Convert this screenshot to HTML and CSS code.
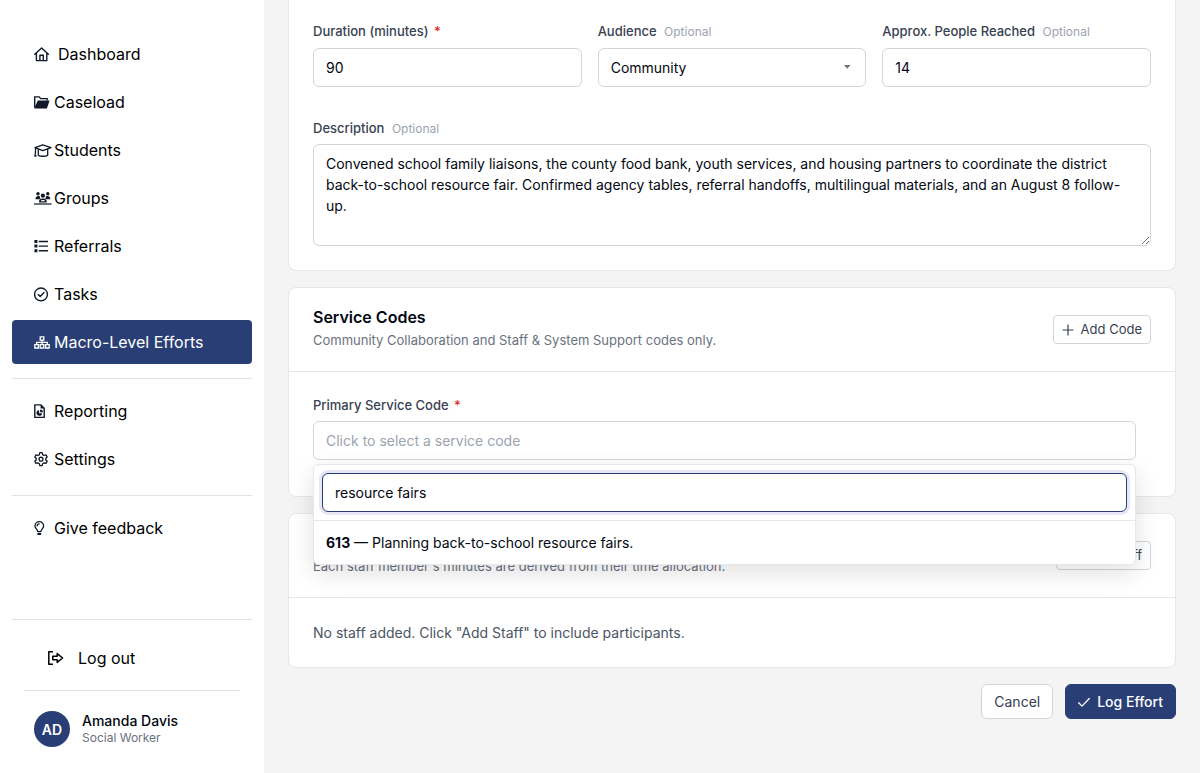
FILE: index.html
```html
<!DOCTYPE html>
<html lang="en">
<head>
<meta charset="utf-8">
<meta name="viewport" content="width=device-width, initial-scale=1">
<title>Log Macro-Level Effort</title>
<link rel="stylesheet" href="styles.css">
</head>
<body>
<div class="app">
  <aside class="sidebar">
    <nav class="nav" aria-label="Main">
      <a class="nav-item nav-item-wide" href="#">
        <svg class="icon" viewBox="0 0 16 16" fill="none" stroke="currentColor" stroke-width="1.4" stroke-linejoin="round" stroke-linecap="round"><path d="M.8 8.300 7.600 1.900l6.800 6.400M2.400 7.200v7.400h10.400V7.200M5.900 14.400V9.300h3.400v5.100"/></svg>
        Dashboard</a>
      <a class="nav-item" href="#">
        <svg class="icon" viewBox="0 0 16 16"><path fill="none" stroke="currentColor" stroke-width="1.400" d="M.7 13.500V2.900h4.500l1.500 1.700h6.400v2"/><path fill="currentColor" d="M3.800 6.500H15.600L12.900 14.500H.2z"/></svg>
        Caseload</a>
      <a class="nav-item" href="#">
        <svg class="icon icon-wide" viewBox="0 0 18 16" fill="none" stroke="currentColor" stroke-width="1.300" stroke-linejoin="round" stroke-linecap="round"><path d="M1 5.600 8.800 2.800l8.200 2.800-8.200 3zM4.300 7.200v6c1.400 1.400 7.800 1.400 9.400 0v-6M1.600 6.200c-.4 2.800.4 5-.8 7.800h1.400"/></svg>
        Students</a>
      <a class="nav-item" href="#">
        <svg class="icon icon-wide" viewBox="0 0 18 16" fill="currentColor"><circle cx="4" cy="3.700" r="1.700"/><circle cx="13.800" cy="3.700" r="1.700"/><circle cx="8.900" cy="5.700" r="2.100"/><path d="M1.500 9.200c0-2.300 1.200-3.300 2.800-3.300l1.700.4c-.2 1.300.1 2.200.8 2.900zM16.300 9.200c0-2.300-1.200-3.300-2.800-3.300l-1.700.4c.2 1.300-.1 2.200-.8 2.900z"/><path fill-rule="evenodd" d="M5 12.400c0-2.600 1.200-3.800 3.900-3.800s3.900 1.200 3.900 3.800zm1.700-1.200h4.400c-.2-.9-.9-1.200-2.200-1.200s-2 .3-2.200 1.200z"/><path d="M0 13.400h17.600v1.200H0z"/></svg>
        Groups</a>
      <a class="nav-item" href="#">
        <svg class="icon" viewBox="0 0 16 16" fill="currentColor"><path d="M.4 2h3v3h-3zM.4 6.600h3v3h-3zM.4 11.200h3v3h-3zM4.800 2.800H14v1.400H4.800zM4.800 7.400H14v1.400H4.800zM4.800 12H14v1.400H4.800z"/></svg>
        Referrals</a>
      <a class="nav-item" href="#">
        <svg class="icon" viewBox="0 0 16 16" fill="none" stroke="currentColor" stroke-width="1.400" stroke-linecap="round" stroke-linejoin="round"><circle cx="7" cy="8.400" r="6.400"/><path d="m4.200 8.600 2 2 3.800-4"/></svg>
        Tasks</a>
      <a class="nav-item nav-item-active" href="#" aria-current="page">
        <svg class="icon" viewBox="0 0 16 16" fill="none" stroke="currentColor" stroke-width="1.300"><path d="M6.200 2.800h3.600v3.400H6.200zM.8 10.600h3.600V14H.8zM6.200 10.600h3.600V14H6.200zM11.600 10.600h3.600V14h-3.600zM8 6.200v4.400M2.600 10.600V8.400h10.800v2.200"/></svg>
        Macro-Level Efforts</a>
      <hr class="rule">
      <a class="nav-item" href="#">
        <svg class="icon" viewBox="0 0 16 16"><path fill="none" stroke="currentColor" stroke-width="1.400" stroke-linejoin="round" d="M.8 1.900h6.200l3.200 3.300v9.200H.8z"/><path fill="currentColor" d="M6.600 1.900v3.700h3.700zM5.100 7.200v3h3a2.800 2.800 0 1 1-3-3zM6.100 6.400a2.800 2.800 0 0 1 2.800 2.800H6.100z"/></svg>
        Reporting</a>
      <a class="nav-item" href="#">
        <svg class="icon" viewBox="0 0 16 16" fill="none" stroke="currentColor" stroke-width="1.300" stroke-linejoin="round"><path d="M5.800 1.700h2.400l.4 1.900 1.500.9 1.900-.6 1.200 2.100-1.400 1.300v1.700l1.400 1.300-1.200 2.100-1.900-.6-1.500.9-.4 1.900H5.800l-.4-1.900-1.500-.9-1.900.6L.8 10.300 2.200 9V7.300L.8 6 2 3.900l1.900.6 1.500-.9z"/><circle cx="7" cy="8.150" r="1.900"/></svg>
        Settings</a>
      <hr class="rule">
      <a class="nav-item" href="#">
        <svg class="icon" viewBox="0 0 16 16" fill="none" stroke="currentColor" stroke-width="1.300" stroke-linecap="round" stroke-linejoin="round"><path d="M3.700 11.600c0-2-2.700-3-2.700-5.700a4.300 4.300 0 0 1 8.600 0c0 2.700-2.700 3.700-2.700 5.700zM3.200 5.800c0-1.200.8-2 2-2"/><path stroke-width="2" d="M4.200 14h2.200"/></svg>
        Give feedback</a>
    </nav>
    <div class="account">
      <hr class="rule">
      <a class="nav-item logout" href="#">
        <svg class="icon icon-wide" viewBox="0 0 18 16" fill="none" stroke="currentColor" stroke-width="1.500" stroke-linejoin="round"><path d="M6 1.800H1.800v12.400H6M5.800 6.200h4.400V3.600L15.600 8l-5.400 4.400V9.800H5.800z"/></svg>
        Log out</a>
      <hr class="rule rule-inset">
      <div class="profile">
        <span class="avatar">AD</span>
        <div class="profile-text">
          <span class="profile-name">Amanda Davis</span>
          <span class="profile-role">Social Worker</span>
        </div>
      </div>
    </div>
  </aside>

  <main class="main">
    <form class="form">
      <section class="card card-continued">
        <div class="field-row">
          <div class="field">
            <label class="label" for="duration">Duration (minutes) <span class="required">*</span></label>
            <input class="control" id="duration" type="text" inputmode="numeric" value="90">
          </div>
          <div class="field">
            <label class="label" for="audience">Audience <span class="optional">Optional</span></label>
            <div class="select-wrap">
              <select class="control" id="audience"><option>Community</option></select>
              <svg class="caret" viewBox="0 0 8 4" fill="currentColor"><path d="M1 0h6.500L4.200 3.800z"/></svg>
            </div>
          </div>
          <div class="field">
            <label class="label" for="people">Approx. People Reached <span class="optional">Optional</span></label>
            <input class="control" id="people" type="text" inputmode="numeric" value="14">
          </div>
        </div>
        <div class="field">
          <label class="label" for="description">Description <span class="optional">Optional</span></label>
          <textarea class="control" id="description" rows="4">Convened school family liaisons, the county food bank, youth services, and housing partners to coordinate the district back-to-school resource fair. Confirmed agency tables, referral handoffs, multilingual materials, and an August 8 follow-up.</textarea>
        </div>
      </section>

      <section class="card">
        <header class="card-header">
          <div>
            <h2 class="card-title">Service Codes</h2>
            <p class="card-subtitle">Community Collaboration and Staff &amp; System Support codes only.</p>
          </div>
          <button class="button button-small" type="button">
            <svg class="button-icon" viewBox="0 0 12 12" stroke="currentColor" stroke-width="1.200"><path d="M6 .5v11M.5 6h11"/></svg>
            Add Code</button>
        </header>
        <div class="card-body codes-body">
          <div class="field picker">
            <label class="label" for="code">Primary Service Code <span class="required">*</span></label>
            <input class="control" id="code" type="text" placeholder="Click to select a service code" readonly>
            <div class="dropdown">
              <div class="dropdown-search">
                <input class="control control-focused" type="text" aria-label="Search service codes" value="resource fairs">
              </div>
              <button class="option" type="button"><strong>613</strong> — Planning back-to-school resource fairs.</button>
            </div>
          </div>
        </div>
      </section>

      <section class="card">
        <header class="card-header">
          <div>
            <h2 class="card-title">Staff</h2>
            <p class="card-subtitle">Each staff member's minutes are derived from their time allocation.</p>
          </div>
          <button class="button button-small" type="button">
            <svg class="button-icon" viewBox="0 0 12 12" stroke="currentColor" stroke-width="1.200"><path d="M6 .5v11M.5 6h11"/></svg>
            Add Staff</button>
        </header>
        <div class="card-body">
          <p class="empty">No staff added. Click "Add Staff" to include participants.</p>
        </div>
      </section>

      <div class="actions">
        <button class="button" type="button">Cancel</button>
        <button class="button button-primary" type="submit">
          <svg class="button-icon" viewBox="0 0 12 12" fill="none" stroke="currentColor" stroke-width="1.300" stroke-linecap="round" stroke-linejoin="round"><path d="m.7 6.800 3.300 3.300 7.300-7.600"/></svg>
          Log Effort</button>
      </div>
    </form>
  </main>
</div>
</body>
</html>
```

FILE: styles.css
```css
* {
  box-sizing: border-box;
}

body {
  margin: 0;
  background: #f4f4f4;
  color: #030712;
  font-family: Inter, "Liberation Sans", sans-serif;
  font-size: 14px;
  line-height: 21px;
}

h2,
p {
  margin: 0;
}

.app {
  display: flex;
  min-height: 100vh;
}

/* Sidebar */

.sidebar {
  display: flex;
  flex: 0 0 264px;
  flex-direction: column;
  justify-content: space-between;
  padding: 32px 12px 26px;
  background: #fff;
}

.nav {
  display: flex;
  flex-direction: column;
  gap: 4px;
}

.nav-item {
  display: flex;
  align-items: center;
  height: 44px;
  padding-left: 22px;
  border-radius: 4px;
  color: #000;
  font-size: 16px;
  text-decoration: none;
}

.nav-item-active {
  background: #293e74;
  color: #fff;
}

.icon {
  flex: none;
  width: 16px;
  height: 16px;
  margin-right: 4px;
  color: #111827;
}

.icon-wide {
  width: 18px;
  margin-right: 2px;
}

.nav-item-wide .icon {
  margin-right: 8px;
}

.nav-item-active .icon {
  color: #fff;
}

.rule {
  width: 100%;
  height: 1px;
  margin: 10px 0 6px;
  border: 0;
  background: #e2e3e5;
}

.account .rule {
  margin: 0;
}

.account .rule-inset {
  width: auto;
  margin: 0 12px;
}

.logout {
  margin: 16px 0 10px;
  padding-left: 35px;
}

.logout .icon {
  margin-right: 13px;
  color: #000;
}

.profile {
  display: flex;
  align-items: center;
  gap: 12px;
  padding: 20px 22px 0;
}

.avatar {
  display: grid;
  place-items: center;
  width: 36px;
  height: 36px;
  border-radius: 50%;
  background: #293e74;
  color: #fff;
  font-weight: 600;
}

.profile-text {
  display: flex;
  flex-direction: column;
  line-height: 17px;
}

.profile-name {
  font-weight: 500;
}

.profile-role {
  color: #6b7280;
  font-size: 12px;
}

/* Cards */

.main {
  flex: 1;
  min-width: 0;
  padding: 0 24px 24px;
}

.form {
  display: flex;
  flex-direction: column;
  gap: 16px;
}

.card {
  border: 1px solid #e5e7eb;
  border-radius: 8px;
  background: #fff;
}

.card-continued {
  display: flex;
  flex-direction: column;
  gap: 32px;
  padding: 22px 24px 24px;
  border-top: 0;
  border-radius: 0 0 8px 8px;
}

.card-header {
  display: flex;
  align-items: center;
  justify-content: space-between;
  padding: 18px 24px;
  border-bottom: 1px solid #e5e7eb;
}

.card-title {
  font-size: 16px;
  font-weight: 600;
  line-height: 22px;
}

.card-subtitle {
  color: #6b7280;
  font-size: 13px;
  line-height: 25px;
}

.card-body {
  padding: 24px;
}

.codes-body {
  padding: 24px 39px 36px 24px;
}

.empty {
  color: #4b5563;
}

/* Fields */

.field-row {
  display: grid;
  grid-template-columns: repeat(3, 1fr);
  gap: 16px;
}

.field {
  display: flex;
  flex-direction: column;
  gap: 6px;
}

.field-row .field {
  gap: 7px;
}

.label {
  color: #374151;
  font-size: 13px;
  font-weight: 500;
  line-height: 19px;
}

.required {
  margin-left: 2px;
  color: #dc2626;
}

.optional {
  margin-left: 4px;
  color: #9ca3af;
  font-size: 12px;
  font-weight: 400;
}

.control {
  display: block;
  width: 100%;
  height: 39px;
  margin: 0;
  padding: 8px 12px;
  border: 1px solid #d1d5db;
  border-radius: 6px;
  outline: 0;
  background: #fff;
  color: #030712;
  font: inherit;
  appearance: none;
}

.control::placeholder {
  color: #9ca3af;
}

textarea.control {
  height: auto;
  resize: vertical;
}

.control-focused {
  border-color: #293e74;
  box-shadow: 0 0 0 3px #e6e9f5;
}

.select-wrap {
  position: relative;
}

.caret {
  position: absolute;
  top: 17px;
  right: 15px;
  width: 8px;
  height: 4px;
  color: #6b7280;
  pointer-events: none;
}

.picker {
  position: relative;
}

.dropdown {
  position: absolute;
  z-index: 1;
  top: calc(100% + 4px);
  right: 0;
  left: 0;
  border: 1px solid #e5e7eb;
  border-radius: 6px;
  background: #fff;
  box-shadow: 0 8px 24px rgba(0, 0, 0, 0.12);
}

.dropdown-search {
  padding: 8px;
  border-bottom: 1px solid #e5e7eb;
}

.option {
  display: block;
  width: 100%;
  padding: 11px 12px;
  border: 0;
  border-radius: 6px;
  background: #fff;
  color: #030712;
  font: inherit;
  text-align: left;
}

.option strong {
  font-weight: 700;
}

/* Buttons */

.button {
  display: inline-flex;
  align-items: center;
  gap: 7px;
  height: 35px;
  padding: 0 12px;
  border: 1px solid #d1d5db;
  border-radius: 6px;
  background: #fff;
  color: #374151;
  font: inherit;
}

.button-small {
  height: 29px;
  padding: 0 8px;
  border-radius: 4px;
  font-size: 13px;
}

.button-primary {
  border-color: #293e74;
  background: #293e74;
  color: #fff;
  font-weight: 500;
}

.button-icon {
  width: 12px;
  height: 12px;
}

.actions {
  display: flex;
  justify-content: flex-end;
  gap: 12px;
}
```
